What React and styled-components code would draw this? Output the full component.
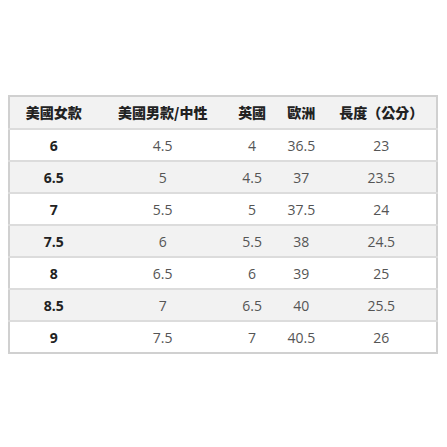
import React from 'react';
import styled, { createGlobalStyle } from 'styled-components';

const GlobalStyle = createGlobalStyle`
  html, body {
    margin: 0;
    padding: 0;
    background: #fff;
  }
  body {
    font-family: "Open Sans", "Noto Sans CJK TC", sans-serif;
  }
`;

const Page = styled.div`
  width: 447px;
  height: 447px;
  padding: 95px 9px 0 8px;
  box-sizing: border-box;
`;

const Table = styled.table`
  width: 430px;
  border-collapse: collapse;
  border: 2px solid #d0d0d0;
  table-layout: fixed;
`;

const HeadCell = styled.th`
  height: 29px;
  padding: 0 0 2px;
  background: #f2f2f2;
  color: #222;
  font-family: "Noto Sans CJK TC", sans-serif;
  font-size: 14px;
  font-weight: 900;
  text-align: center;
  border-bottom: 2px solid #dcdcdc;
`;

const Row = styled.tr`
  background: ${({ shaded }) => (shaded ? '#f2f2f2' : '#fff')};
  border-bottom: 2px solid #dcdcdc;
  &:last-child {
    border-bottom: none;
  }
`;

const Cell = styled.td`
  height: 30px;
  padding: 0;
  text-align: center;
  font-size: 14px;
  color: ${({ bold }) => (bold ? '#222' : '#555')};
  font-weight: ${({ bold }) => (bold ? 700 : 400)};
`;

const columns = [
  { label: '美國女款', width: 88 },
  { label: '美國男款/中性', width: 130 },
  { label: '英國', width: 48 },
  { label: '歐洲', width: 50 },
  { label: '長度（公分）', width: 110 },
];

const sizes = [
  ['6', '4.5', '4', '36.5', '23'],
  ['6.5', '5', '4.5', '37', '23.5'],
  ['7', '5.5', '5', '37.5', '24'],
  ['7.5', '6', '5.5', '38', '24.5'],
  ['8', '6.5', '6', '39', '25'],
  ['8.5', '7', '6.5', '40', '25.5'],
  ['9', '7.5', '7', '40.5', '26'],
];

export default function App() {
  return (
    <>
      <GlobalStyle />
      <Page>
        <Table>
          <colgroup>
            {columns.map((c) => (
              <col key={c.label} style={{ width: c.width }} />
            ))}
          </colgroup>
          <thead>
            <tr>
              {columns.map((c) => (
                <HeadCell key={c.label}>{c.label}</HeadCell>
              ))}
            </tr>
          </thead>
          <tbody>
            {sizes.map((row, i) => (
              <Row key={i} shaded={i % 2 === 1}>
                {row.map((v, j) => (
                  <Cell key={j} bold={j === 0}>{v}</Cell>
                ))}
              </Row>
            ))}
          </tbody>
        </Table>
      </Page>
    </>
  );
}
